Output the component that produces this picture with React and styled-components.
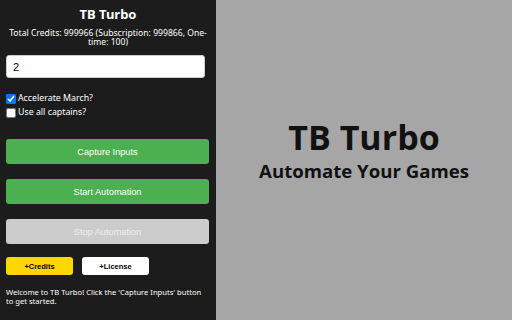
import React from "react";
import styled, { createGlobalStyle } from "styled-components";

const Global = createGlobalStyle`
  html, body { margin: 0; padding: 0; }
  body { width: 512px; height: 320px; overflow: hidden; background: #a6a6a6; }
`;

const Page = styled.div`
  display: flex;
  width: 512px;
  height: 320px;
`;

const Panel = styled.div`
  width: 216px;
  flex-shrink: 0;
  background: #1c1c1c;
  color: #fff;
  font-family: "Noto Sans", sans-serif;
  box-sizing: border-box;
  padding: 6px 6px 0 6px;
  display: flex;
  flex-direction: column;
`;

const Title = styled.h1`
  margin: 0;
  text-align: center;
  font-size: 13px;
  font-weight: bold;
  line-height: 16px;
`;

const Credits = styled.p`
  margin: 7px 0 0;
  text-align: center;
  font-size: 8.6px;
  line-height: 9px;
`;

const Input = styled.input`
  margin-top: 8px;
  width: 199px;
  height: 23px;
  box-sizing: border-box;
  border: 1px solid #ccc;
  border-radius: 3px;
  padding: 0 6px;
  font-family: "Liberation Sans", sans-serif;
  font-size: 11px;
  color: #000;
  background: #fff;
`;

const Options = styled.div`
  margin-top: 14px;
  display: flex;
  flex-direction: column;
  gap: 1px;
`;

const Option = styled.label`
  display: flex;
  align-items: center;
  gap: 2px;
  font-size: 8.8px;
  line-height: 13px;
  input { margin: 0; width: 10px; height: 10px; }
`;

const Button = styled.button`
  display: block;
  width: 203px;
  height: 25px;
  padding: 0;
  border: none;
  border-radius: 3px;
  background: ${(p) => (p.$off ? "#cccccc" : "#4caf50")};
  color: ${(p) => (p.$off ? "#eeeeee" : "#ffffff")};
  font-family: "Liberation Sans", sans-serif;
  font-size: 9.2px;
  margin-top: ${(p) => p.$mt}px;
`;

const Small = styled.div`
  margin-top: 13px;
  display: flex;
  gap: 9px;
`;

const SmallButton = styled.button`
  width: 67px;
  height: 18px;
  padding: 0;
  border: none;
  border-radius: 3px;
  background: ${(p) => p.$bg};
  color: #000;
  font-family: "Liberation Sans", sans-serif;
  font-weight: bold;
  font-size: 7.5px;
`;

const Welcome = styled.p`
  margin: 13px 0 0;
  font-size: 7.6px;
  line-height: 9px;
`;

const Hero = styled.div`
  flex: 1;
  display: flex;
  flex-direction: column;
  align-items: center;
  justify-content: center;
  font-family: "Open Sans", sans-serif;
  font-weight: bold;
  color: #111;
  padding-bottom: 22px;
`;

const HeroTitle = styled.div`
  font-size: 34px;
  line-height: 44px;
`;

const HeroSub = styled.div`
  font-size: 18.6px;
  line-height: 24px;
`;

export default function App() {
  return (
    <>
      <Global />
      <Page>
        <Panel>
          <Title>TB Turbo</Title>
          <Credits>Total Credits: 999966 (Subscription: 999866, One-time: 100)</Credits>
          <Input defaultValue="2" />
          <Options>
            <Option><input type="checkbox" defaultChecked /> Accelerate March?</Option>
            <Option><input type="checkbox" /> Use all captains?</Option>
          </Options>
          <Button $mt={20}>Capture Inputs</Button>
          <Button $mt={15}>Start Automation</Button>
          <Button $mt={15} $off>Stop Automation</Button>
          <Small>
            <SmallButton $bg="#ffd700">+Credits</SmallButton>
            <SmallButton $bg="#ffffff">+License</SmallButton>
          </Small>
          <Welcome>Welcome to TB Turbo! Click the 'Capture Inputs' button to get started.</Welcome>
        </Panel>
        <Hero>
          <HeroTitle>TB Turbo</HeroTitle>
          <HeroSub>Automate Your Games</HeroSub>
        </Hero>
      </Page>
    </>
  );
}
